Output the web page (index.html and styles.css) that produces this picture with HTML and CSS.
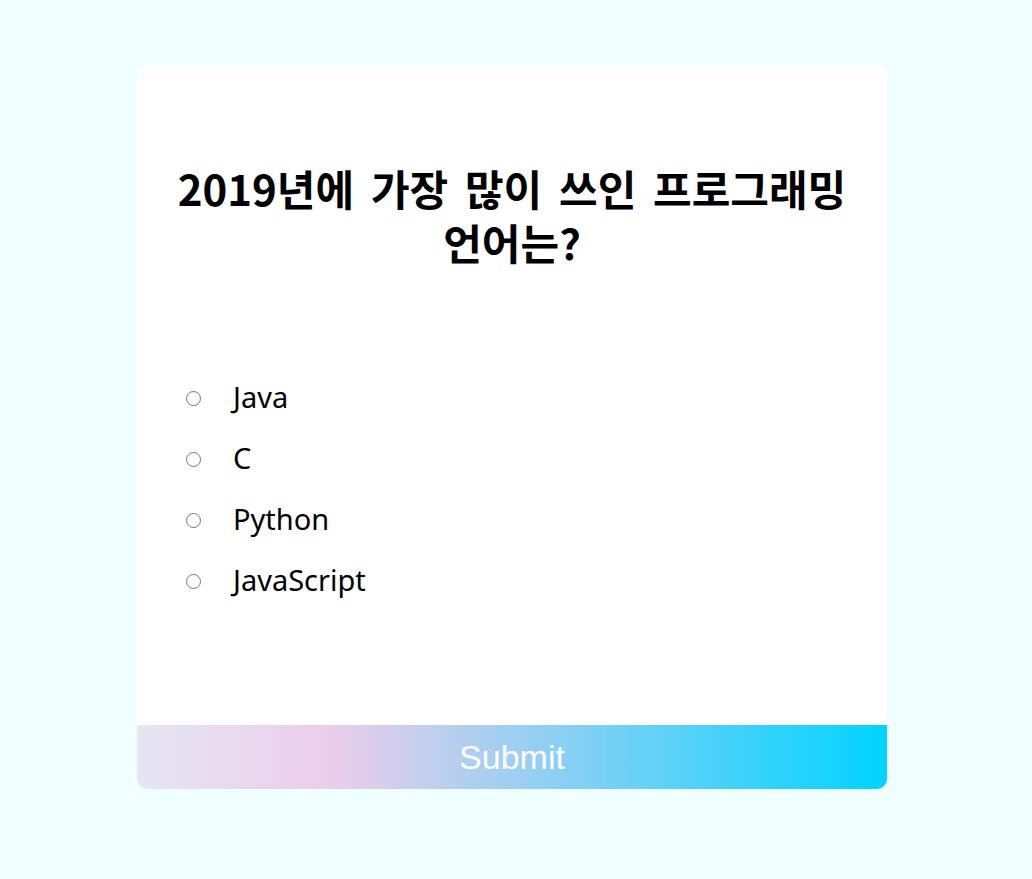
FILE: index.html
```html
<!DOCTYPE html>
<html lang="ko">
<head>
<meta charset="utf-8">
<title>Quiz</title>
<link rel="stylesheet" href="styles.css">
</head>
<body>
<div class="page">
  <div class="quiz-card">
    <div class="quiz-header">
      <h2 class="question">2019년에 가장 많이 쓰인 프로그래밍 언어는?</h2>
      <ul class="answers">
        <li class="answer"><input type="radio" name="answer" id="a" class="radio"><label for="a" class="label">Java</label></li>
        <li class="answer"><input type="radio" name="answer" id="b" class="radio"><label for="b" class="label">C</label></li>
        <li class="answer"><input type="radio" name="answer" id="c" class="radio"><label for="c" class="label">Python</label></li>
        <li class="answer"><input type="radio" name="answer" id="d" class="radio"><label for="d" class="label">JavaScript</label></li>
      </ul>
    </div>
    <button class="submit" type="button">Submit</button>
  </div>
</div>
</body>
</html>
```
FILE: styles.css
```css
html, body {
  margin: 0;
  padding: 0;
}
body {
  background: #f0ffff;
  font-family: "Noto Sans", "Noto Sans CJK KR", sans-serif;
}
.page {
  display: flex;
  justify-content: center;
  padding: 66px 8px 0 0;
}
.quiz-card {
  width: 750px;
  background: #ffffff;
  border-radius: 10px;
  overflow: hidden;
  display: flex;
  flex-direction: column;
}
.quiz-header {
  height: 659px;
  padding: 95px 30px 0;
  box-sizing: border-box;
}
.question {
  margin: 0;
  text-align: center;
  font-family: "Noto Sans CJK KR", "Noto Sans", sans-serif;
  font-weight: 700;
  font-size: 42px;
  line-height: 54px;
  word-break: keep-all;
  word-spacing: 5px;
  color: #000;
}
.answers {
  list-style: none;
  margin: 99px 0 0;
  padding: 0 0 0 19px;
}
.answer {
  display: flex;
  align-items: center;
  height: 61px;
  font-size: 29px;
  color: #000;
}
.radio {
  appearance: none;
  -webkit-appearance: none;
  width: 15px;
  height: 15px;
  margin: 0 32px 0 0;
  border: 1px solid #767676;
  border-radius: 50%;
  box-sizing: border-box;
  background: #fff;
  flex-shrink: 0;
}
.label {
  padding-bottom: 5px;
}
.submit {
  display: block;
  width: 100%;
  height: 64px;
  border: none;
  margin: 0;
  padding: 0;
  background: linear-gradient(90deg, #e6e6f4 0%, #ebcdea 26%, #00d4ff 100%);
  color: #ffffff;
  font-family: "Liberation Sans", Arial, sans-serif;
  font-size: 34px;
  cursor: pointer;
}
```
